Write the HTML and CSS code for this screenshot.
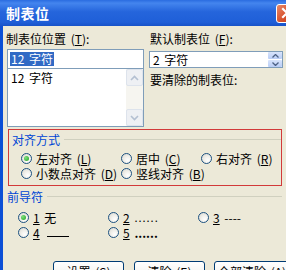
FILE: index.html
```html
<!DOCTYPE html>
<html lang="zh-CN">
<head>
    <meta charset="UTF-8">
    <title>制表位</title>
    <link rel="stylesheet" href="styles.css">
</head>
<body>
    <div class="window">
        <div class="titlebar">
            <span class="title">制表位</span>
            <span class="close">
                <svg width="12" height="12" viewBox="0 0 12 12"><path d="M2 2 L10 10 M10 2 L2 10" stroke="#fff" stroke-width="2.2" stroke-linecap="square"/></svg>
            </span>
        </div>

        <div class="content">
            <div class="top">
                <div class="col-left">
                    <div class="label">制表位位置 (<u>T</u>):</div>
                    <div class="combo">
                        <div class="combo-edit"><span class="selected">12 字符</span></div>
                        <div class="combo-list">
                            <div class="list-items">
                                <div>12 字符</div>
                            </div>
                            <div class="scrollbar">
                                <div class="sb-btn">
                                    <svg width="9" height="6" viewBox="0 0 9 6"><path d="M1 5 L4.5 1.5 L8 5" fill="none" stroke="#b4c0d2" stroke-width="1.6"/></svg>
                                </div>
                                <div class="sb-track"></div>
                                <div class="sb-btn">
                                    <svg width="9" height="6" viewBox="0 0 9 6"><path d="M1 1 L4.5 4.5 L8 1" fill="none" stroke="#b4c0d2" stroke-width="1.6"/></svg>
                                </div>
                            </div>
                        </div>
                    </div>
                </div>
                <div class="col-right">
                    <div class="label">默认制表位 (<u>F</u>):</div>
                    <div class="spin">
                        <span>2 字符</span>
                        <div class="spin-btns">
                            <div class="spin-btn"><svg width="7" height="4" viewBox="0 0 7 4"><path d="M0.5 3.5 L3.5 0.5 L6.5 3.5" fill="none" stroke="#4d6185" stroke-width="1.3"/></svg></div>
                            <div class="spin-btn"><svg width="7" height="4" viewBox="0 0 7 4"><path d="M0.5 0.5 L3.5 3.5 L6.5 0.5" fill="none" stroke="#4d6185" stroke-width="1.3"/></svg></div>
                        </div>
                    </div>
                    <div class="label clear-label">要清除的制表位:</div>
                </div>
            </div>

            <div class="highlight">
                <div class="group-title">对齐方式</div>
                <div class="radios align-grid">
                    <div class="radio checked"><i></i>左对齐 (<u>L</u>)</div>
                    <div class="radio"><i></i>居中 (<u>C</u>)</div>
                    <div class="radio"><i></i>右对齐 (<u>R</u>)</div>
                    <div class="radio"><i></i>小数点对齐 (<u>D</u>)</div>
                    <div class="radio"><i></i>竖线对齐 (<u>B</u>)</div>
                </div>
            </div>

            <div class="group-title leader-title">前导符</div>
            <div class="radios leader-grid">
                <div class="radio checked"><i></i><u>1</u>&nbsp;无</div>
                <div class="radio"><i></i><u>2</u>&nbsp;<span class="dots">......</span></div>
                <div class="radio"><i></i><u>3</u>&nbsp;----</div>
                <div class="radio"><i></i><u>4</u>&nbsp;<span class="line"></span></div>
                <div class="radio"><i></i><u>5</u>&nbsp;<span class="bold-dots">......</span></div>
            </div>

            <div class="buttons">
                <div class="btn">设置 (<u>S</u>)</div>
                <div class="btn">清除 (<u>E</u>)</div>
                <div class="btn">全部清除 (<u>A</u>)</div>
            </div>
        </div>
    </div>
</body>
</html>
```

FILE: styles.css
```css
* {
    box-sizing: border-box;
    margin: 0;
    padding: 0;
}

html, body {
    width: 286px;
    height: 270px;
    overflow: hidden;
}

body {
    font-family: "Noto Sans CJK SC", sans-serif;
    font-size: 12px;
    word-spacing: 2px;
    color: #000000;
    background-color: #ece9d8;
}

u {
    text-decoration: underline;
    text-underline-offset: 1px;
}

.window {
    width: 292px;
    height: 270px;
    border-left: 3px solid #0b4fd6;
    background-color: #ece9d8;
}

/* title bar */
.titlebar {
    height: 26px;
    margin-left: -3px;
    display: flex;
    align-items: center;
    justify-content: space-between;
    padding: 0 0 0 6px;
    background: linear-gradient(#2a6ce0 0%, #4485ee 12%, #2565dc 45%, #1f5fd8 85%, #1752c8 100%);
}

.title {
    color: #ffffff;
    font-size: 14px;
    font-weight: bold;
    line-height: 16px;
    letter-spacing: 0.5px;
}

.close {
    width: 21px;
    height: 19px;
    margin-right: -5px;
    display: flex;
    align-items: center;
    justify-content: center;
    border: 1px solid #ffffff;
    border-radius: 3px;
    background: linear-gradient(135deg, #e88a6a 0%, #d8542f 50%, #c23a16 100%);
}

.content {
    padding: 0 0 0 3px;
}

/* top columns */
.top {
    display: grid;
    grid-template-columns: 143px 134px;
}

.label {
    line-height: 14px;
    margin-top: 6px;
    white-space: nowrap;
}

.col-right .label {
    padding-left: 1px;
}

.combo {
    margin-top: 3px;
    margin-left: 1px;
    width: 137px;
}

.combo-edit {
    height: 20px;
    background-color: #ffffff;
    border: 1px solid #7f9db9;
    padding: 2px 0 0 2px;
    line-height: 14px;
}

.selected {
    display: inline-block;
    background-color: #316ac5;
    color: #ffffff;
    padding: 0 1px;
}

.combo-list {
    height: 58px;
    display: flex;
    background-color: #ffffff;
    border: 1px solid #7f9db9;
    border-top: none;
}

.list-items {
    flex: 1;
    padding: 2px 0 0 3px;
    line-height: 14px;
}

.scrollbar {
    width: 17px;
    display: flex;
    flex-direction: column;
    background-color: #f6f5f0;
}

.sb-btn {
    height: 17px;
    display: flex;
    align-items: center;
    justify-content: center;
    background-color: #eef0f4;
    border: 1px solid #dde3ec;
    border-radius: 2px;
}

.sb-track {
    flex: 1;
}

.spin {
    margin-top: 5px;
    height: 17px;
    display: flex;
    align-items: center;
    justify-content: space-between;
    background-color: #ffffff;
    border: 1px solid #7f9db9;
    padding-left: 3px;
    line-height: 14px;
}

.spin-btns {
    width: 14px;
    height: 15px;
    display: flex;
    flex-direction: column;
    gap: 1px;
}

.spin-btn {
    flex: 1;
    display: flex;
    align-items: center;
    justify-content: center;
    background: linear-gradient(#d8e4fb, #b9cdf6);
    border-radius: 1px;
}

.clear-label {
    margin-top: 5px;
}

/* alignment group, with the red marking around it */
.highlight {
    margin: 2px 0 0 2px;
    width: 274px;
    height: 57px;
    border: 1px solid #d23a3a;
    padding: 3px 0 0 3px;
}

.group-title {
    display: flex;
    align-items: center;
    gap: 4px;
    color: #0046d5;
    line-height: 13px;
    white-space: nowrap;
}

.group-title::after {
    content: "";
    flex: 1;
    border-top: 1px solid #d0d0bf;
}

.leader-title {
    margin-top: 4px;
    width: 276px;
    padding-left: 1px;
}

.radios {
    display: grid;
    padding-left: 9px;
}

.align-grid {
    margin-top: 5px;
    grid-template-columns: 100px 80px auto;
}

.leader-grid {
    margin-top: 7px;
    padding-left: 12px;
    grid-template-columns: 90px 90px auto;
}

.radio {
    display: flex;
    align-items: center;
    height: 15px;
    line-height: 15px;
    white-space: nowrap;
}

.radio i {
    width: 11px;
    height: 11px;
    margin-right: 4px;
    border: 1px solid #1c5180;
    border-radius: 50%;
    background: radial-gradient(circle at 65% 70%, #ffffff 0%, #f0efea 45%, #d6d5cd 100%);
    flex: none;
    display: flex;
    align-items: center;
    justify-content: center;
}

.radio.checked i::after {
    content: "";
    width: 5px;
    height: 5px;
    border-radius: 50%;
    background: radial-gradient(circle at 35% 35%, #7fe07f, #21a121);
}

.dots {
    letter-spacing: 1px;
    font-size: 11px;
}

.bold-dots {
    font-weight: bold;
    letter-spacing: 0;
}

.line {
    display: inline-block;
    width: 22px;
    height: 9px;
    border-bottom: 1px solid #000000;
    margin-left: 3px;
}

/* bottom buttons */
.buttons {
    margin-top: 21px;
    display: flex;
    gap: 10px;
    padding-left: 47px;
}

.btn {
    width: 71px;
    height: 23px;
    border: 1px solid #003c74;
    border-radius: 3px;
    background: linear-gradient(#ffffff, #f0f0ea 80%, #d6d0c5);
    text-align: center;
    line-height: 18px;
    padding-top: 1px;
    white-space: nowrap;
}

.btn:last-child {
    width: 76px;
    margin-left: -1px;
}
```
